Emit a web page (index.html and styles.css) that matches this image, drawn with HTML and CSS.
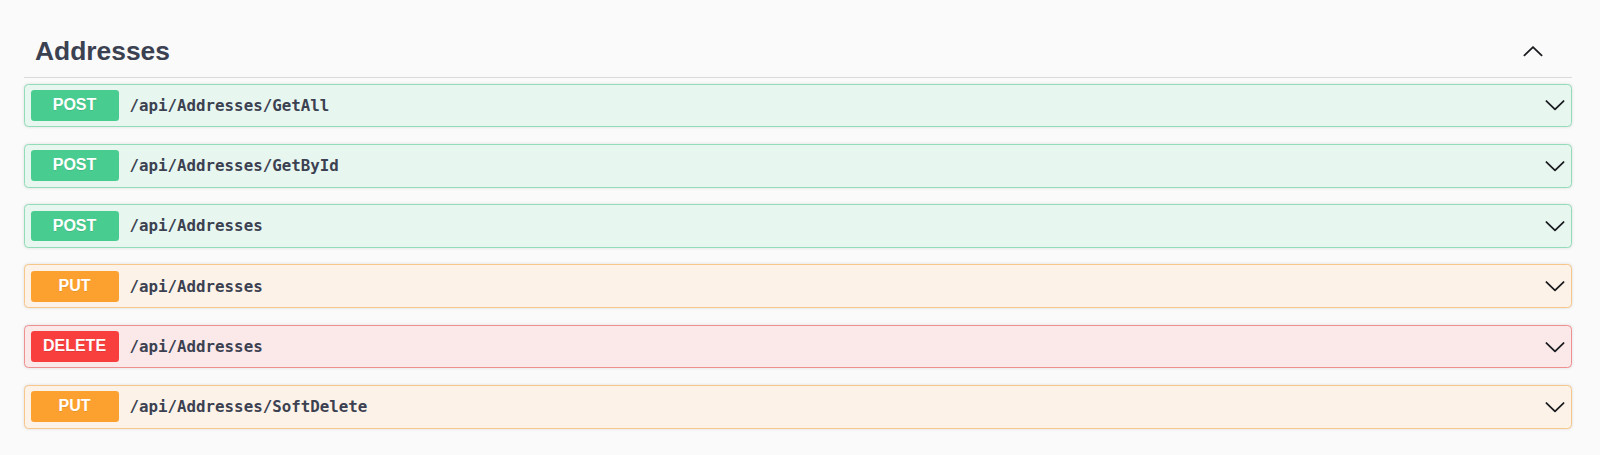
FILE: index.html
```html
<!DOCTYPE html>
<html>
<head>
<meta charset="utf-8">
<link rel="stylesheet" href="styles.css">
</head>
<body>
<div class="wrapper">
  <h3 class="tag">
    <span class="tag-name">Addresses</span>
    <svg class="arrow" width="22" height="22" viewBox="0 0 20 20"><polyline points="2.2,14 10,6.4 17.8,14"/></svg>
  </h3>
  <div class="op post">
    <span class="method">POST</span>
    <span class="path">/api/Addresses/GetAll</span>
    <svg class="arrow" width="22" height="22" viewBox="0 0 20 20"><polyline points="2.2,6.4 10,14 17.8,6.4"/></svg>
  </div>
  <div class="op post">
    <span class="method">POST</span>
    <span class="path">/api/Addresses/GetById</span>
    <svg class="arrow" width="22" height="22" viewBox="0 0 20 20"><polyline points="2.2,6.4 10,14 17.8,6.4"/></svg>
  </div>
  <div class="op post">
    <span class="method">POST</span>
    <span class="path">/api/Addresses</span>
    <svg class="arrow" width="22" height="22" viewBox="0 0 20 20"><polyline points="2.2,6.4 10,14 17.8,6.4"/></svg>
  </div>
  <div class="op put">
    <span class="method">PUT</span>
    <span class="path">/api/Addresses</span>
    <svg class="arrow" width="22" height="22" viewBox="0 0 20 20"><polyline points="2.2,6.4 10,14 17.8,6.4"/></svg>
  </div>
  <div class="op delete">
    <span class="method">DELETE</span>
    <span class="path">/api/Addresses</span>
    <svg class="arrow" width="22" height="22" viewBox="0 0 20 20"><polyline points="2.2,6.4 10,14 17.8,6.4"/></svg>
  </div>
  <div class="op put">
    <span class="method">PUT</span>
    <span class="path">/api/Addresses/SoftDelete</span>
    <svg class="arrow" width="22" height="22" viewBox="0 0 20 20"><polyline points="2.2,6.4 10,14 17.8,6.4"/></svg>
  </div>
</div>
</body>
</html>
```
FILE: styles.css
```css
html, body {
  margin: 0;
  padding: 0;
  background: #fafafa;
}
body {
  font-family: "Liberation Sans", Arial, sans-serif;
  color: #3b4151;
}
.wrapper {
  padding: 25px 28px 0 24px;
}
.tag {
  display: flex;
  align-items: center;
  justify-content: space-between;
  margin: 0 0 5.5px;
  padding: 11px 28px 11px 11px;
  border-bottom: 1px solid #d9dadc;
  font-size: 26.4px;
  font-weight: 700;
  line-height: 30px;
  color: #3b4151;
}
.arrow {
  flex: none;
  display: block;
}
.arrow polyline {
  fill: none;
  stroke: #1a1c20;
  stroke-width: 1.6;
  stroke-linecap: round;
  stroke-linejoin: round;
}
.op {
  display: flex;
  align-items: center;
  padding: 5.5px;
  margin: 0 0 16.5px;
  border: 1px solid;
  border-radius: 4.4px;
  box-shadow: 0 0 3.3px rgba(0, 0, 0, 0.12);
}
.method {
  flex: none;
  min-width: 88px;
  padding: 6px 0 7.2px;
  line-height: 17.6px;
  font-size: 16px;
  font-weight: 700;
  text-align: center;
  color: #fff;
  border-radius: 3.3px;
  text-shadow: 0 1px 0 rgba(0, 0, 0, 0.1);
}
.path {
  flex: 1;
  padding: 0 11px;
  font-family: "DejaVu Sans Mono", monospace;
  font-size: 15.8px;
  font-weight: 700;
  color: #3b4151;
}
.post {
  background: #e7f6ef;
  border-color: #93dcb9;
}
.post .method { background: #49cc90; }
.put {
  background: #fcf2e7;
  border-color: #f6c68a;
}
.put .method { background: #fca130; }
.delete {
  background: #fbe8e8;
  border-color: #ee8f90;
}
.delete .method { background: #f93e3e; }
```
